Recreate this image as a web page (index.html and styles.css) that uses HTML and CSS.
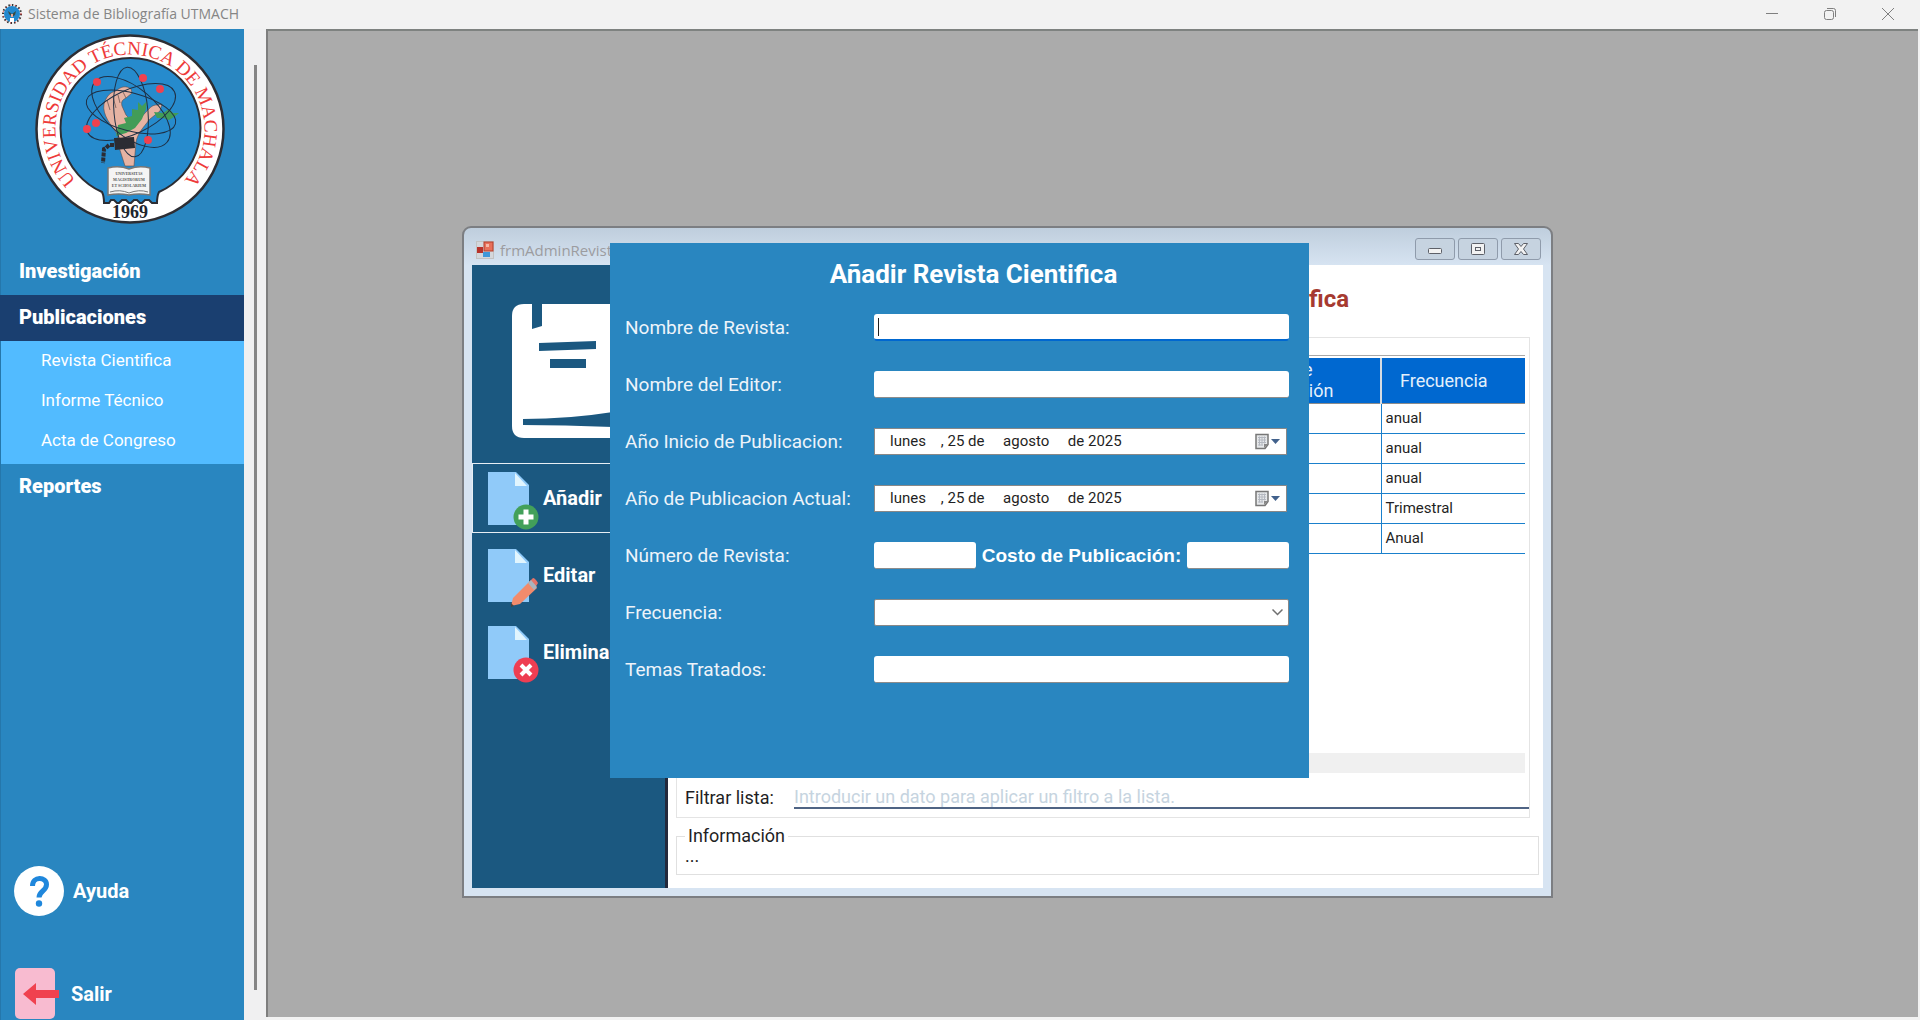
FILE: index.html
```html
<!DOCTYPE html>
<html lang="es">
<head>
<meta charset="utf-8">
<title>Sistema de Bibliografía UTMACH</title>
<link rel="stylesheet" href="styles.css">
</head>
<body>
<svg class="defs" width="0" height="0" aria-hidden="true">
  <symbol id="doc" viewBox="0 0 51 58">
    <path d="M0 0h28l13 13v40H0z" fill="#90caf9"/>
    <path d="M27 1l12 13H27z" fill="#e1f5fe"/>
  </symbol>
  <symbol id="cal" viewBox="0 0 24 18">
    <path d="M1 1.500h12v10l-3 4H1z" fill="#e6e8ea" stroke="#777" stroke-width="1.500"/>
    <path d="M3 4.500h8M3 7h8M3 9.500h8M3 12h5M4.500 3.500v9M7 3.500v9M9.500 3.500v7" stroke="#b4b8c0" stroke-width="1"/>
    <path d="M13 11l-4 4v-4z" fill="#888"/>
    <path d="M16 6h9l-4.500 5z" fill="#41618c"/>
  </symbol>
</svg>

<header class="app-bar">
  <svg class="app-icon" viewBox="0 0 20 20" aria-hidden="true">
    <circle cx="10" cy="10" r="9" fill="none" stroke="#333" stroke-width="2" stroke-dasharray="1.500 2"/>
    <circle cx="10" cy="10" r="9" fill="none" stroke="#e33" stroke-width="1" stroke-dasharray="1 4"/>
    <circle cx="10" cy="10" r="8" fill="#2389cf"/>
    <path d="M6 7l4 3 4-3-1 4-3 2-3-3z" fill="#3c4a40"/>
    <path d="M8 14h4v4H8z" fill="#fff"/>
    <path d="M9 10h2v3H9z" fill="#e0aaa0"/>
  </svg>
  <span class="app-name">Sistema de Bibliografía UTMACH</span>
  <button class="sys" aria-label="Minimizar"><svg viewBox="0 0 14 14"><path d="M1 6.500h12"/></svg></button>
  <button class="sys" aria-label="Restaurar"><svg viewBox="0 0 14 14"><rect x="1.500" y="3.500" width="9" height="9" rx="2"/><path d="M4 1.500h6.500a2 2 0 0 1 2 2V10"/></svg></button>
  <button class="sys" aria-label="Cerrar"><svg viewBox="0 0 14 14"><path d="M1 1l12 12M13 1L1 13"/></svg></button>
</header>

<div class="body">
  <aside class="sidebar">
    <svg class="seal" viewBox="0 0 190 190" role="img" aria-label="Universidad Técnica de Machala">
      <circle cx="95" cy="95" r="93.500" fill="#fff" stroke="#2c2d33" stroke-width="2.500"/>
      <path d="M67 158A70 70 0 1 1 124 158Q122 162 122 169H116Q114 165 111 165T106 169Q104 166 100 166T95 169Q92 166 89 166T84 169Q82 166 78 166T74 169H69Q69 162 67 158z" fill="#268bcd"/>
      <path d="M67 158A70 70 0 1 1 124 158Q122 162 122 169H117L114 166H110L107 169H105L102 166H99L96 169H94L91 166H87L84 169H82L79 166H76L74 169H69Q69 162 67 158z" fill="#268bcd" stroke="#2c2d33" stroke-width="2"/>
      <path id="arc" d="M42.300 147.700A74.500 74.500 0 1 1 147.700 147.700" fill="none"/>
      <text class="seal-name"><textPath href="#arc" startOffset="50%">UNIVERSIDAD TÉCNICA DE MACHALA</textPath></text>
      <path d="M83 101c-7-10-16-20-14-31 2-7 6-12 12-13 4-4 10-6 15-2l1 4-6 5c-4 2-5 4-4 8l4 9 9 9 11-12c5-5 6-7 11-7l5-1-2 7-10 8c-8 10-12 14-14 23l-2 24h-9l-7-22z" fill="#e6b3a3" stroke="#5c4a48" stroke-width=".6"/>
      <path d="M72 66l3 10M78 63l3 11M83 61l2 8M88 58l3 6" stroke="#5c4a48" stroke-width=".7"/>
      <path d="M81 102l2-11 8-2-2-5 8-2v-7l6 1 0-8 4 4 5-5-1 8-4 10-7 9-9 5z" fill="#429c57"/>
      <path d="M119 78l9 1 6-4 4 4 6 0-5 4-5 3-6-2-6 0z" fill="#429c57"/>
      <g fill="none" stroke="#1f3045" stroke-width="1">
        <ellipse cx="96" cy="78" rx="45" ry="17" transform="rotate(85 96 78)"/>
        <ellipse cx="96" cy="78" rx="47" ry="24" transform="rotate(40 96 78)"/>
        <ellipse cx="96" cy="78" rx="48" ry="22" transform="rotate(-25 96 78)"/>
        <ellipse cx="96" cy="78" rx="46" ry="19" transform="rotate(15 96 78)"/>
      </g>
      <path d="M79 104l20-1 1 11-20 2z" fill="#2b2c33"/>
      <path d="M79 111h-5l-3 3-2 1-1 14" fill="none" stroke="#2b2c33" stroke-width="4" stroke-dasharray="4 1"/>
      <g fill="#f0414f"><circle cx="62" cy="48" r="4"/><circle cx="108" cy="44" r="4"/><circle cx="125" cy="55" r="4"/><circle cx="52" cy="95" r="4"/><circle cx="61" cy="89" r="4"/><circle cx="113" cy="106" r="4"/></g>
      <path d="M73 134q11-3 21 1 10-4 21-1v27q-11-2-21 0-10-2-21 0z" fill="#f4f4f4" stroke="#777" stroke-width="1.500"/>
      <path d="M75 158q10-3 19 1 10-4 19-1" fill="none" stroke="#777" stroke-width="1"/>
      <g class="seal-book"><text x="94" y="141">UNIVERSITAS</text><text x="94" y="147">MAGISTRORUM</text><text x="94" y="153">ET SCHOLARIUM</text></g>
      <text class="seal-year" x="95" y="184">1969</text>
    </svg>

    <nav class="menu">
      <a class="item" href="#">Investigación</a>
      <a class="item active" href="#">Publicaciones</a>
      <div class="submenu">
        <a href="#">Revista Cientifica</a>
        <a href="#">Informe Técnico</a>
        <a href="#">Acta de Congreso</a>
      </div>
      <a class="item" href="#">Reportes</a>
    </nav>

    <div class="foot">
      <button class="foot-btn">
        <svg width="50" height="50" viewBox="0 0 50 50" aria-hidden="true"><circle cx="25" cy="25" r="25" fill="#fff"/><path d="M18.500 20c0-10 14-9.500 14-1.500 0 6.500-7.500 6.500-7.500 13" fill="none" stroke="#1f87dc" stroke-width="5"/><circle cx="25" cy="37.500" r="3.200" fill="#1f87dc"/></svg>
        Ayuda
      </button>
      <button class="foot-btn">
        <svg width="48" height="51" viewBox="0 0 48 51" aria-hidden="true"><rect x="1" width="40" height="51" rx="5" fill="#f8bbd0"/><path d="M9 26l13-11v7h23v8H22v7z" fill="#f0414f"/></svg>
        Salir
      </button>
    </div>
  </aside>

  <div class="rail"><div class="rail-thumb"></div></div>

  <main class="workspace">
    <section class="window" aria-label="frmAdminRevista">
      <header class="win-bar">
        <svg width="18" height="18" viewBox="0 0 18 18" aria-hidden="true"><rect x=".5" y=".5" width="17" height="17" fill="#d4d7dc" stroke="#c2c2c2"/><rect x="8" y="1" width="9" height="9" fill="#e8705a" stroke="#b33e2c"/><rect x="10" y="3" width="3" height="3" fill="#f6b7a7"/><rect x="1" y="6" width="6" height="6" fill="#b8322a"/><rect x="7" y="11" width="7" height="5" fill="#3f97d8"/></svg>
        <span class="win-title">frmAdminRevista</span>
        <button class="win-btn" aria-label="Minimizar"><svg viewBox="0 0 16 14"><rect x="1.500" y="6.500" width="13" height="5" rx="1"/></svg></button>
        <button class="win-btn" aria-label="Maximizar"><svg viewBox="0 0 16 14"><rect x="1.500" y="1.500" width="13" height="11" rx="1"/><rect x="5.500" y="5.500" width="5" height="3"/></svg></button>
        <button class="win-btn" aria-label="Cerrar"><svg viewBox="0 0 16 14"><path d="M1.500 1.500h4L8 4.500l2.500-3h4L10.500 7l4 5.500h-4L8 9.500l-2.500 3h-4L5.500 7z"/></svg></button>
      </header>
      <div class="win-client">
        <div class="tools">
          <div class="book">
            <svg width="134" height="134" viewBox="0 0 134 134" aria-hidden="true">
              <path d="M12 0h110q12 0 12 12v110q0 12-12 12H12Q0 134 0 122V12Q0 0 12 0z" fill="#fff"/>
              <path d="M20 0h10v22l-10 3zM27 39l57-2v8l-57 2zM38 55h36v9H38zM11 115q46 0 90-7v15q-50-2-90-2z" fill="#1b5880"/>
            </svg>
          </div>
          <button class="tool selected">
            <svg width="51" height="58"><use href="#doc"/><circle cx="38" cy="45" r="12.500" fill="#43a05a"/><path d="M35.500 37.500h5v5h5v5h-5v5h-5v-5h-5v-5h5z" fill="#fff"/></svg>
            <span>Añadir</span>
          </button>
          <button class="tool">
            <svg width="51" height="58"><use href="#doc"/><path d="M25 49L42 32l7 7-17 16-9 2z" fill="#f28b6c"/><path d="M41 33l4-4q2 0 5 5l-3 5z" fill="#e57368"/><path d="M40 34l3-3 6 7-3 3z" fill="#a9b4be"/><path d="M23 54l3 3-3 1z" fill="#444"/></svg>
            <span>Editar</span>
          </button>
          <button class="tool">
            <svg width="51" height="58"><use href="#doc"/><circle cx="38" cy="44" r="12.500" fill="#ee3e52"/><path d="M33 39l10 10M43 39L33 49" stroke="#fff" stroke-width="4"/></svg>
            <span>Eliminar</span>
          </button>
        </div>

        <div class="content">
          <h1>Revista Cientifica</h1>
          <div class="listing">
            <div class="grid">
              <table>
                <colgroup><col class="c-a"><col class="c-b"><col class="c-c"><col></colgroup>
                <thead><tr><th></th><th></th><th>Fecha de Publicación</th><th>Frecuencia</th></tr></thead>
                <tbody>
                  <tr><td></td><td></td><td></td><td>anual</td></tr>
                  <tr><td></td><td></td><td></td><td>anual</td></tr>
                  <tr><td></td><td></td><td></td><td>anual</td></tr>
                  <tr><td></td><td></td><td></td><td>Trimestral</td></tr>
                  <tr><td></td><td></td><td></td><td>Anual</td></tr>
                </tbody>
              </table>
              <div class="grid-scroll"></div>
            </div>
            <div class="filter">
              <label for="filtro">Filtrar lista:</label>
              <input id="filtro" type="text" placeholder="Introducir un dato para aplicar un filtro a la lista.">
            </div>
          </div>
          <fieldset class="info">
            <legend>Información</legend>
            <p>...</p>
          </fieldset>
        </div>
      </div>
    </section>

    <form class="dialog">
      <h2>Añadir Revista Cientifica</h2>
      <div class="row"><label for="nombre">Nombre de Revista:</label><input class="field focused" id="nombre" type="text"></div>
      <div class="row"><label for="editor">Nombre del Editor:</label><input class="field" id="editor" type="text"></div>
      <div class="row"><label for="inicio">Año Inicio de Publicacion:</label>
        <div class="date"><input id="inicio" type="text" value="lunes    , 25 de     agosto     de 2025"><button type="button" aria-label="Abrir calendario"><svg width="26" height="18"><use href="#cal"/></svg></button></div></div>
      <div class="row"><label for="actual">Año de Publicacion Actual:</label>
        <div class="date"><input id="actual" type="text" value="lunes    , 25 de     agosto     de 2025"><button type="button" aria-label="Abrir calendario"><svg width="26" height="18"><use href="#cal"/></svg></button></div></div>
      <div class="row"><label for="numero">Número de Revista:</label>
        <div class="pair"><input class="field" id="numero" type="text"><label class="cost" for="costo">Costo de Publicación:</label><input class="field" id="costo" type="text"></div></div>
      <div class="row"><label for="frecuencia">Frecuencia:</label>
        <div class="combo"><select id="frecuencia"><option></option></select><svg width="11" height="7" viewBox="0 0 11 7" aria-hidden="true"><path d="M.5 .5l5 5 5-5" fill="none" stroke="#707070" stroke-width="1.500"/></svg></div></div>
      <div class="row"><label for="temas">Temas Tratados:</label><input class="field" id="temas" type="text"></div>
    </form>
  </main>
</div>
</body>
</html>
```
FILE: styles.css
```css
* { box-sizing: border-box; }

body {
  margin: 0;
  min-height: 100vh;
  display: flex;
  flex-direction: column;
  background: #f2f2f2;
  font-family: Roboto, "Liberation Sans", sans-serif;
  color: #1f1f24;
}

button, input, select { font: inherit; color: inherit; margin: 0; }
button { border: 0; background: none; padding: 0; text-align: left; }
a { color: inherit; text-decoration: none; }
h1, h2, p { margin: 0; }
.defs { position: absolute; }

/* application title bar */
.app-bar {
  height: 29px;
  display: flex;
  align-items: center;
  padding: 0 3px 2px 2px;
  background: #f2f2f2;
}
.app-icon { width: 20px; height: 20px; }
.app-name {
  flex: 1;
  margin-left: 6px;
  font: 14px "Open Sans", "Noto Sans", sans-serif;
  color: #858585;
}
.sys { width: 58px; display: flex; justify-content: center; }
.sys svg { width: 14px; height: 14px; fill: none; stroke: #7f7f7f; }

.body { flex: 1; display: flex; }

/* side menu */
.sidebar {
  width: 244px;
  display: flex;
  flex-direction: column;
  background: #2986c0;
  border-left: 1px solid #2577ab;
  color: #fff;
}
.seal { width: 190px; height: 190px; margin: 5px 0 0 34px; }
.seal-name { font: 19px "Liberation Serif", serif; fill: #ee3a3a; text-anchor: middle; }
.seal-year { font: bold 18px "Liberation Serif", serif; fill: #20242c; text-anchor: middle; }
.seal-book { font: bold 4px "Liberation Serif", serif; fill: #555; text-anchor: middle; }

.menu { margin-top: 25px; }
.item {
  display: flex;
  align-items: center;
  height: 46px;
  padding: 0 0 2px 18px;
  font-size: 20px;
  font-weight: 900;
}
.item.active { background: #1a3f70; margin-left: -1px; padding-left: 19px; }
.submenu { background: #52bbff; padding-bottom: 3px; }
.submenu a {
  display: flex;
  align-items: center;
  height: 40px;
  padding: 0 0 3px 40px;
  font-size: 17px;
}

.foot { margin-top: auto; padding: 0 0 1px 13px; }
.foot-btn {
  display: flex;
  align-items: center;
  gap: 9px;
  font-size: 20px;
  font-weight: 700;
}
.foot-btn + .foot-btn { margin-top: 52px; }

.rail { width: 22px; padding: 36px 0 30px 10px; background: #f0f0f1; display: flex; }
.rail-thumb { width: 3px; background: #858585; }

/* workspace */
.workspace {
  flex: 1;
  position: relative;
  margin: 0 2px 3px 0;
  border-top: 2px solid #7e8280;
  border-left: 2px solid #7e7e7e;
  background: #ababab;
}

.window {
  position: absolute;
  left: 194px;
  top: 195px;
  width: 1091px;
  height: 672px;
  display: flex;
  flex-direction: column;
  padding: 0 8px 8px;
  border: 2px solid #7c7e82;
  border-radius: 9px 9px 0 0;
  background: linear-gradient(#bfcedd, #d7e4f2 38px);
}
.win-bar { height: 38px; display: flex; align-items: center; padding: 6px 2px 0 4px; }
.win-title {
  flex: 1;
  margin-left: 6px;
  font: 15px "Open Sans", "Noto Sans", sans-serif;
  color: #9c9ca0;
}
.win-btn {
  width: 40px;
  height: 22px;
  margin: 0 0 2px 3px;
  display: flex;
  align-items: center;
  justify-content: center;
  border: 1px solid #8f9bab;
  border-radius: 3px;
  background: #c6d3e0;
}
.win-btn svg { width: 16px; height: 14px; fill: #f2f2f2; stroke: #5d6068; stroke-width: 1; }

.win-client { flex: 1; display: flex; background: #fff; }

.tools {
  width: 196px;
  display: flex;
  flex-direction: column;
  gap: 7px;
  background: #1b5880;
  border-right: 3px solid #23293c;
  color: #fff;
}
.book { height: 191px; padding: 39px 0 0 40px; }
.tool {
  height: 70px;
  display: flex;
  padding: 8px 0 0 15px;
  gap: 4px;
  border: 1px solid transparent;
  font-size: 20px;
  font-weight: 700;
}
.tool.selected { border-color: #e8eef4; }
.tool span { line-height: 52px; }

.content { flex: 1; display: flex; flex-direction: column; padding: 0 4px 13px 8px; }
.content h1 {
  height: 72px;
  padding: 20px 190px 0 0;
  line-height: 28px;
  text-align: right;
  font-size: 24px;
  font-weight: 700;
  color: #a63a30;
}
.listing {
  height: 481px;
  margin-right: 9px;
  display: flex;
  flex-direction: column;
  padding: 17px 0 8px 4px;
  border: 1px solid #e4e4e4;
}
.grid { flex: 1; display: flex; flex-direction: column; margin-right: 4px; border-top: 1px solid #a8a8a8; }
table { width: 100%; table-layout: fixed; border-collapse: collapse; margin-top: 2px; }
.c-a { width: 280px; }
.c-b { width: 260px; }
.c-c { width: 160px; }
th {
  height: 45px;
  padding: 0 18px;
  background: #0068d0;
  border-bottom: 1px solid #8c8c8c;
  border-right: 2px solid #d5dbe2;
  color: #e4f0fb;
  font-size: 18px;
  font-weight: 400;
  line-height: 21px;
  text-align: left;
}
th:last-child, td:last-child { border-right: 0; }
td {
  height: 30px;
  padding: 0 4px;
  border-bottom: 1px solid #1a80cc;
  border-right: 1px solid #1a80cc;
  font-size: 15px;
  line-height: 20px;
}
.grid-scroll { height: 20px; margin: auto 0 12px; background: #f0f0f0; }
.filter { display: flex; align-items: center; height: 24px; padding-left: 4px; font-size: 18px; }
.filter label { width: 109px; }
.filter input {
  flex: 1;
  height: 24px;
  padding: 0;
  border: 0;
  border-bottom: 2px solid #4f6484;
  outline: 0;
  background: #fff;
}
.filter input::placeholder { color: #c6d4e0; opacity: 1; }

.info {
  margin: 7px 0 0;
  height: 50px;
  padding: 0 8px;
  border: 1px solid #e0e0e0;
  font-size: 18px;
}
.info legend { padding: 0 3px; line-height: 22px; }
.info p { line-height: 18px; }

/* add-record form */
.dialog {
  position: absolute;
  left: 342px;
  top: 212px;
  width: 699px;
  height: 535px;
  padding: 16px 20px 0 15px;
  background: #2986c0;
  color: #eef4fa;
}
.dialog h2 {
  padding-left: 33px;
  line-height: 30px;
  margin-bottom: 10px;
  text-align: center;
  font-size: 26px;
  font-weight: 700;
  color: #fff;
}
.row { display: flex; align-items: center; height: 57px; font-size: 19px; }
.row > label { width: 249px; }
.field {
  flex: 1;
  min-width: 0;
  height: 27px;
  padding: 0 4px;
  border: 0;
  border-bottom: 1px solid #8c8c8c;
  border-radius: 3px;
  outline: 0;
  background: #fff;
  color: #1f1f24;
  font-size: 15px;
}
.focused {
  border-bottom: 2px solid #0067d0;
  background: linear-gradient(#222, #222) 4px 4px / 1px 18px no-repeat #fff;
}
.date, .combo {
  flex: 1;
  height: 27px;
  display: flex;
  align-items: center;
  border: 1px solid #888;
  background: #fff;
  color: #1f1f24;
}
.date { margin-right: 2px; padding: 0 6px 0 15px; }
.date input { flex: 1; height: 24px; padding: 0 0 2px; border: 0; outline: 0; background: none; font-size: 15px; }
.date button { height: 18px; }
.date svg, .combo svg { display: block; }
.combo { border-radius: 2px; padding-right: 5px; }
.combo select { flex: 1; height: 24px; border: 0; outline: 0; appearance: none; background: none; font-size: 15px; }
.pair { flex: 1; display: flex; align-items: center; }
.pair .field { flex: 0 0 102px; }
.pair .cost { flex: 1; text-align: center; font: bold 19px "Liberation Sans", sans-serif; color: #fff; }
```
